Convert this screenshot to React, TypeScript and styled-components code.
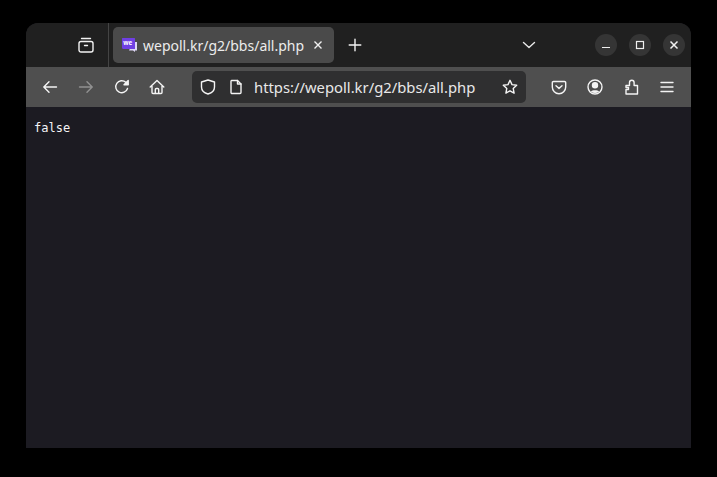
import React from "react";
import styled, { createGlobalStyle } from "styled-components";

const Global = createGlobalStyle`
  html, body { margin: 0; padding: 0; background: #000; }
  body { width: 717px; height: 477px; overflow: hidden; }
`;
const Win = styled.div`
  margin: 23px 0 0 26px; width: 665px; height: 425px;
  display: flex; flex-direction: column; overflow: hidden;
  border-radius: 12px 12px 0 0; background: #1c1b22;
`;
const TabStrip = styled.div`
  height: 44px; flex: none; background: #202020; display: flex; align-items: center;
`;
const LeftSlot = styled.div`
  width: 83px; height: 44px; flex: none; box-sizing: border-box; padding-right: 14px;
  border-right: 1px solid #444; display: flex; align-items: center; justify-content: flex-end; color: #f3f3f3;
`;
const Tab = styled.div`
  margin-left: 4px; width: 221px; height: 36px; flex: none; box-sizing: border-box; padding: 0 8px;
  border-radius: 5px; background: #4a4a4a; display: flex; align-items: center; color: #f0f0f0;
`;
const TabTitle = styled.span`
  margin-left: 6px; flex: 1; font: 14px "Noto Sans", sans-serif; white-space: nowrap; color: #ececec;
`;
const Plus = styled.div`
  margin-left: 13px; width: 16px; height: 16px; display: flex; color: #f3f3f3;
`;
const Chevron = styled.div`
  margin-left: 158px; width: 16px; height: 16px; display: flex; color: #e8e8e8;
`;
const WinBtns = styled.div`
  margin-left: 58px; display: flex; gap: 12px;
`;
const WinBtn = styled.div`
  width: 22px; height: 22px; border-radius: 50%; background: #353535; color: #f0f0f0;
  display: flex; align-items: center; justify-content: center;
`;
const Toolbar = styled.div`
  height: 40px; flex: none; background: #4f4f4f; display: flex; align-items: center; padding-left: 16px; color: #f4f4f4;
`;
const NavIcon = styled.div<{ $gap: number; $dim?: boolean }>`
  width: 16px; height: 16px; display: flex; margin-right: ${(p) => p.$gap}px;
  opacity: ${(p) => (p.$dim ? 0.4 : 1)};
`;
const UrlBar = styled.div`
  width: 334px; height: 32px; flex: none; box-sizing: border-box; border-radius: 5px; background: #2f2f30;
  display: flex; align-items: center; padding: 0 8px; margin-right: 25px;
`;
const UrlIcon = styled.div<{ $gap: number }>`
  width: 16px; height: 16px; display: flex; margin-right: ${(p) => p.$gap}px;
`;
const UrlText = styled.span`
  flex: 1; font: 14.8px "Noto Sans", sans-serif; white-space: nowrap; color: #e8e8e8;
`;
const Star = styled.div`
  width: 16px; height: 16px; display: flex;
`;
const Content = styled.pre`
  flex: 1; margin: 0; padding: 14px 8px 0; font: 12px/15px "DejaVu Sans Mono", monospace; color: #f4f4f6; background: #1c1b22;
`;

const S = { width: 16, height: 16, viewBox: "0 0 16 16", fill: "none", stroke: "currentColor", strokeWidth: 1.4, strokeLinecap: "round", strokeLinejoin: "round" } as const;

export default function App() {
  return (
    <>
      <Global />
      <Win>
        <TabStrip>
          <LeftSlot>
            <svg {...S}>
              <path d="M3.5 1.500h9" />
              <rect x="1" y="4.500" width="14" height="10.500" rx="2" />
              <path d="M6.500 8.500h3" />
            </svg>
          </LeftSlot>
          <Tab>
            <svg width="16" height="16" viewBox="0 0 16 16">
              <path d="M12 5h4v8.500h-2V15l-2-1.500H8z" fill="#ddd6f5" />
              <path d="M1.500 1h12a.5.5 0 0 1 .5.500V12H2.500a1.500 1.500 0 0 1-1.500-1.500V1.500a.5.5 0 0 1 .5-.5z" fill="#6f3fe3" />
              <text x="2.300" y="8" fontFamily="Noto Sans" fontWeight="700" fontSize="6.200" fill="#fff">we</text>
            </svg>
            <TabTitle>wepoll.kr/g2/bbs/all.php</TabTitle>
            <svg width="16" height="16" viewBox="0 0 16 16" fill="none" stroke="currentColor" strokeWidth="1.4">
              <path d="M4.500 4.500l7 7M11.500 4.500l-7 7" />
            </svg>
          </Tab>
          <Plus>
            <svg {...S}>
              <path d="M8 2.200v11.600M2.200 8h11.600" />
            </svg>
          </Plus>
          <Chevron>
            <svg {...S}>
              <path d="M2.500 5.500L8 10.500l5.500-5" />
            </svg>
          </Chevron>
          <WinBtns>
            <WinBtn>
              <svg width="12" height="12" viewBox="0 0 12 12" stroke="currentColor" strokeWidth="1.200"><path d="M2 8.500h8" /></svg>
            </WinBtn>
            <WinBtn>
              <svg width="12" height="12" viewBox="0 0 12 12" fill="none" stroke="currentColor" strokeWidth="1.200"><rect x="2.500" y="2.500" width="7" height="7" /></svg>
            </WinBtn>
            <WinBtn>
              <svg width="12" height="12" viewBox="0 0 12 12" fill="none" stroke="currentColor" strokeWidth="1.500"><path d="M2.500 2.500l7 7M9.500 2.500l-7 7" /></svg>
            </WinBtn>
          </WinBtns>
        </TabStrip>
        <Toolbar>
          <NavIcon $gap={20}>
            <svg {...S}><path d="M14.500 8H2M7 2.800L1.800 8 7 13.200" /></svg>
          </NavIcon>
          <NavIcon $gap={20} $dim>
            <svg {...S}><path d="M1.500 8H14M9 2.800L14.200 8 9 13.200" /></svg>
          </NavIcon>
          <NavIcon $gap={19}>
            <svg {...S}><path d="M13.500 9.500A6 6 0 1 1 11.800 3.300L13.800 5.300" /><path d="M14.200 1.500v4.200h-4.200z" fill="currentColor" /></svg>
          </NavIcon>
          <NavIcon $gap={27}>
            <svg {...S}><path d="M1.200 8L8 1.500 14.800 8M3 7v6.500a1 1 0 0 0 1 1h8a1 1 0 0 0 1-1V7M6.300 14.500V10.500a1 1 0 0 1 1-1h1.400a1 1 0 0 1 1 1v4" /></svg>
          </NavIcon>
          <UrlBar>
            <UrlIcon $gap={12}>
              <svg {...S}><path d="M8 1L14.500 3v5c0 3.500-3 6-6.500 7-3.500-1-6.500-3.500-6.500-7V3z" /></svg>
            </UrlIcon>
            <UrlIcon $gap={10}>
              <svg {...S}><path d="M3.500 1.500H9.500L13 5v8.500a1 1 0 0 1-1 1H4a1 1 0 0 1-1-1V2z" /><path d="M9.500 1.500V5H13" /></svg>
            </UrlIcon>
            <UrlText>https://wepoll.kr/g2/bbs/all.php</UrlText>
            <Star>
              <svg {...S}><path d="M8 1.300l2 4.300 4.700.6-3.500 3.200.9 4.700L8 11.800l-4.100 2.300.9-4.700L1.300 6.200 6 5.600z" /></svg>
            </Star>
          </UrlBar>
          <NavIcon $gap={20}>
            <svg {...S}><path d="M2.500 2.500h11a1.200 1.200 0 0 1 1.200 1.200V8A6.700 6.700 0 0 1 1.300 8V3.700a1.200 1.200 0 0 1 1.200-1.200zM5 6.800L8 9.400l3-2.600" /></svg>
          </NavIcon>
          <NavIcon $gap={20}>
            <svg {...S}>
              <circle cx="8" cy="8" r="7" />
              <circle cx="8" cy="6.300" r="2.500" fill="currentColor" />
              <path d="M3.800 12.400C5.500 10.800 10.500 10.800 12.200 12.400A6 6 0 0 1 3.800 12.400z" fill="currentColor" stroke="none" />
            </svg>
          </NavIcon>
          <NavIcon $gap={20}>
            <svg {...S}><path d="M3 6.500h3.500V3.500a2.300 2.300 0 0 1 4.600 0v3h3.400V15H3v-4.500h2.500V8.500H3z" /></svg>
          </NavIcon>
          <NavIcon $gap={0}>
            <svg {...S}><path d="M2 3.500h12M2 8h12M2 12.500h12" /></svg>
          </NavIcon>
        </Toolbar>
        <Content>false</Content>
      </Win>
    </>
  );
}
